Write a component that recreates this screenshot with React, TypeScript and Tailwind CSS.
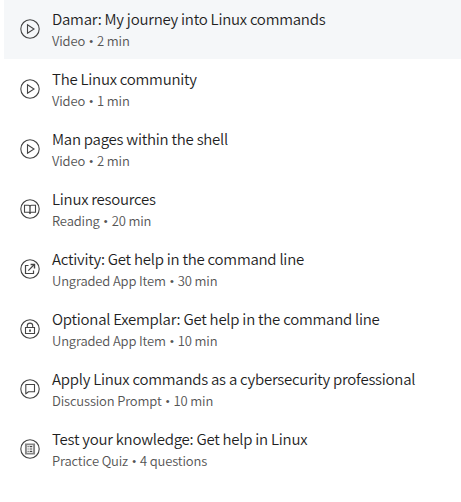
import type { ReactNode } from "react";

type Kind = "video" | "reading" | "app" | "locked" | "discussion" | "quiz";

const glyphs: Record<Kind, ReactNode> = {
  video: <path d="M7.500 5.700v8.600l6.500-4.300z" />,
  reading: (
    <g>
      <path d="M10 6.900Q9.500 6.300 8.500 6.300H4.500v6.900h4.300Q9.700 13.200 10 13.900Q10.300 13.200 11.200 13.200h4.300V6.300h-4Q10.500 6.300 10 6.900z" />
      <path d="M10 6.900v8" strokeWidth="1.300" />
    </g>
  ),
  app: (
    <g>
      <path d="M8.500 6.500H5.500v8h8v-3M8.300 11.700l6-6.200" strokeWidth="1.200" />
      <path d="M10.600 5.500h3.900v3.900" strokeWidth="1.400" />
    </g>
  ),
  locked: (
    <g>
      <path d="M5.500 8.500h9v6h-9zM7.300 8.500V6.600a2.700 2.500 0 0 1 5.400 0v1.900" />
      <path d="M10 10.500v2.200" strokeWidth="1.700" />
    </g>
  ),
  discussion: <path d="M5.800 5.500h8.700v7.300H8.500l-2.700 2.100z" strokeLinejoin="round" />,
  quiz: (
    <g>
      <path d="M5.900 5.400h8.200v9.200H5.900z" stroke="#858585" strokeWidth="1.900" />
      <path d="M7.600 7.600h1M9.600 7.600h2.700M7.600 10h1M9.600 10h2.700M7.600 12.400h1M9.600 12.400h2.700" />
    </g>
  ),
};

const items: { kind: Kind; title: string; type: string; length: string }[] = [
  { kind: "video", title: "Damar: My journey into Linux commands", type: "Video", length: "2 min" },
  { kind: "video", title: "The Linux community", type: "Video", length: "1 min" },
  { kind: "video", title: "Man pages within the shell", type: "Video", length: "2 min" },
  { kind: "reading", title: "Linux resources", type: "Reading", length: "20 min" },
  { kind: "app", title: "Activity: Get help in the command line", type: "Ungraded App Item", length: "30 min" },
  { kind: "locked", title: "Optional Exemplar: Get help in the command line", type: "Ungraded App Item", length: "10 min" },
  { kind: "discussion", title: "Apply Linux commands as a cybersecurity professional", type: "Discussion Prompt", length: "10 min" },
  { kind: "quiz", title: "Test your knowledge: Get help in Linux", type: "Practice Quiz", length: "4 questions" },
];

export default function App() {
  return (
    <main className="h-[502px] w-full overflow-hidden bg-white pl-1 font-['Noto_Sans_CJK_SC',sans-serif]">
      <ul className="-mt-px">
        {items.map((item, i) => (
          <li
            key={item.title}
            className={`flex h-[60px] items-center gap-3 pl-4 ${i === 0 ? "bg-[#f5f7f9]" : ""}`}
          >
            <svg
              className="size-5 shrink-0 text-[#444]"
              viewBox="0 0 20 20"
              fill="none"
              stroke="currentColor"
              strokeWidth="1.100"
            >
              <circle cx="10" cy="10" r="9.200" />
              {glyphs[item.kind]}
            </svg>
            <div className="whitespace-nowrap">
              <p className="text-[15px] leading-6 font-[350] tracking-[-0.255px] text-[#1f1f1f]">{item.title}</p>
              <p className="flex text-[13px] leading-5 font-[350] tracking-[-0.155px] text-[#555]">
                <span>{item.type}</span>
                <span className="w-3 pt-px text-center font-['DejaVu_Sans',sans-serif] text-[11px]">•</span>
                <span>{item.length}</span>
              </p>
            </div>
          </li>
        ))}
      </ul>
    </main>
  );
}
